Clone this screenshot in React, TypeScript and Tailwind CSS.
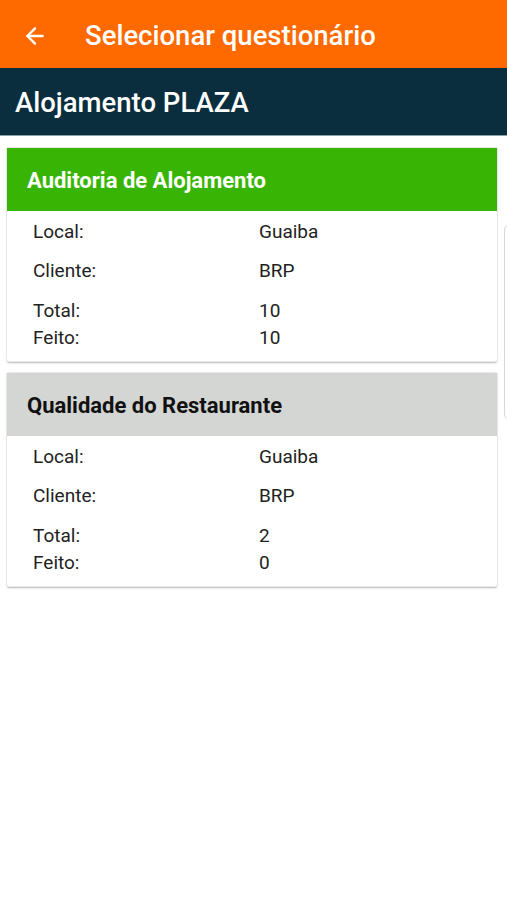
import { ArrowLeft } from "lucide-react";

type Questionario = {
  titulo: string;
  cor: "verde" | "cinza";
  local: string;
  cliente: string;
  total: number;
  feito: number;
};

const questionarios: Questionario[] = [
  { titulo: "Auditoria de Alojamento", cor: "verde", local: "Guaiba", cliente: "BRP", total: 10, feito: 10 },
  { titulo: "Qualidade do Restaurante", cor: "cinza", local: "Guaiba", cliente: "BRP", total: 2, feito: 0 },
];

const Linha = ({ label, valor, altura }: { label: string; valor: string | number; altura: string }) => (
  <div className={`flex leading-[27px] ${altura}`}>
    <span className="w-[226px] shrink-0">{label}</span>
    <span>{valor}</span>
  </div>
);

const CardQuestionario = ({ q }: { q: Questionario }) => {
  const cabecalho =
    q.cor === "verde" ? "bg-[#38b504] text-white" : "bg-[#d4d6d4] text-[#111]";

  return (
    <div className="bg-white rounded-[2px] shadow-[0_0_0_1px_#e8e8e8,0_2px_2px_rgba(0,0,0,0.28)]">
      <div className={`h-[63px] flex items-center px-[20px] pt-[2px] text-[22px] font-bold ${cabecalho}`}>
        {q.titulo}
      </div>
      {/* dados do questionario */}
      <div className="pt-[7px] pb-[10px] pl-[26px] text-[19px] text-[#222]">
        <Linha label="Local:" valor={q.local} altura="h-[39px]" />
        <Linha label="Cliente:" valor={q.cliente} altura="h-[40px]" />
        <Linha label="Total:" valor={q.total} altura="h-[27px]" />
        <Linha label="Feito:" valor={q.feito} altura="h-[27px]" />
      </div>
    </div>
  );
};

export default function App() {
  return (
    <div className="w-[507px] h-[900px] bg-white overflow-hidden font-['Roboto',_'Liberation_Sans',_sans-serif]">
      <header className="h-[68px] bg-[#fe6900] flex items-center text-white pt-[3px]">
        <button className="w-[70px] pl-[22px] flex items-center">
          <ArrowLeft size={26} strokeWidth={2.2} />
        </button>
        <h1 className="ml-[15px] text-[27.5px] font-medium">Selecionar questionário</h1>
      </header>

      <div className="h-[68px] bg-[#0a2e3d] flex items-center px-[15px] pt-[3px] text-white text-[27.5px] font-medium border-b border-[#8aa0a8]">
        Alojamento PLAZA
      </div>

      <div className="flex">
        <div className="w-[504px] shrink-0 pl-[7px] pr-[7px] pt-[12px] flex flex-col gap-[12px]">
          {questionarios.map((q) => (
            <CardQuestionario key={q.titulo} q={q} />
          ))}
        </div>
        {/* proxima pagina aparecendo na borda */}
        <div className="mt-[88px] h-[196px] w-[40px] shrink-0 rounded-[6px] border border-[#d8d8d8] bg-white" />
      </div>
    </div>
  );
}
